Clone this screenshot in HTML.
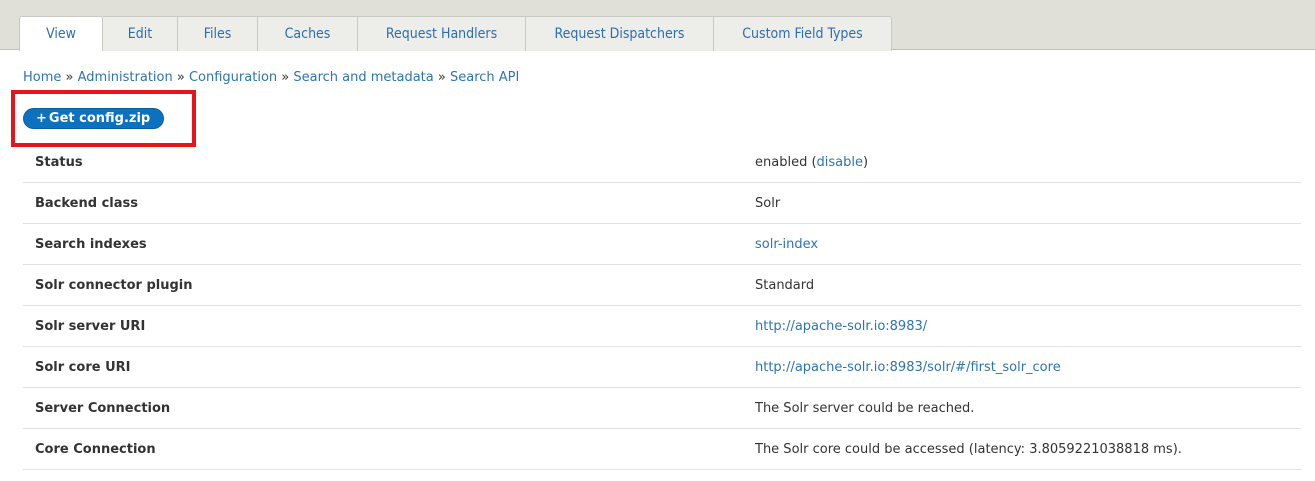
<!DOCTYPE html>
<html><head><meta charset="utf-8"><style>
*{margin:0;padding:0;box-sizing:border-box}
body{width:1315px;height:481px;background:#fff;font-family:"DejaVu Sans","Liberation Sans",sans-serif;font-size:13px;color:#333;position:relative;overflow:hidden}
.hdr{position:absolute;left:0;top:0;width:1315px;height:50px;background:#e0dfd8;border-bottom:1px solid #bfbfba}
.tab{position:absolute;top:16px;height:35px;background:#ededea;border:1px solid #c9c9c3;border-bottom:none;color:#2d6fad;font-family:"DejaVu Sans Condensed","DejaVu Sans",sans-serif;font-size:14px;text-align:center;line-height:34px;border-left:none}
.tab.first{border-left:1px solid #c9c9c3;border-radius:3px 0 0 0}
.tab.last{border-radius:0 3px 0 0}
.tab.act{background:#fff;height:35px;border-radius:3px 3px 0 0}
a{color:#2d74b3;text-decoration:none}
.bc{position:absolute;left:23px;top:70px;font-size:13px}
.box{position:absolute;left:11px;top:90px;width:185px;height:57px;border:4px solid #e8141c}
.btn{position:absolute;left:23px;top:108px;width:141px;height:21px;background:#0c72bf;border-radius:11px;border:1px solid #0a5fa0;color:#fff;font-weight:bold;font-size:13px;line-height:19px;padding-left:12px}
.row{position:absolute;left:23px;width:1278px;height:41px;border-bottom:1px solid #e2e2e2}
.row b{position:absolute;left:12px;top:13px;font-size:13px;color:#333}
.row span{position:absolute;left:732px;top:13px}
</style></head><body>
<div class="hdr"></div>
<div class="tab first act" style="left:19px;width:84px">View</div>
<div class="tab" style="left:103px;width:75px">Edit</div>
<div class="tab" style="left:178px;width:80px">Files</div>
<div class="tab" style="left:258px;width:100px">Caches</div>
<div class="tab" style="left:358px;width:168px">Request Handlers</div>
<div class="tab" style="left:526px;width:188px">Request Dispatchers</div>
<div class="tab last" style="left:714px;width:178px">Custom Field Types</div>
<div class="bc"><a>Home</a> » <a>Administration</a> » <a>Configuration</a> » <a>Search and metadata</a> » <a>Search API</a></div>
<div class="box"></div>
<div class="btn">+<span style="margin-left:2px">Get config.zip</span></div>
<div class="row" style="top:142px"><b>Status</b><span>enabled (<a>disable</a>)</span></div>
<div class="row" style="top:183px"><b>Backend class</b><span>Solr</span></div>
<div class="row" style="top:224px"><b>Search indexes</b><span><a>solr-index</a></span></div>
<div class="row" style="top:265px"><b>Solr connector plugin</b><span>Standard</span></div>
<div class="row" style="top:306px"><b>Solr server URI</b><span><a>http://apache-solr.io:8983/</a></span></div>
<div class="row" style="top:347px"><b>Solr core URI</b><span><a>http://apache-solr.io:8983/solr/#/first_solr_core</a></span></div>
<div class="row" style="top:388px"><b>Server Connection</b><span>The Solr server could be reached.</span></div>
<div class="row" style="top:429px"><b>Core Connection</b><span>The Solr core could be accessed (latency: 3.8059221038818 ms).</span></div>
</body></html>
